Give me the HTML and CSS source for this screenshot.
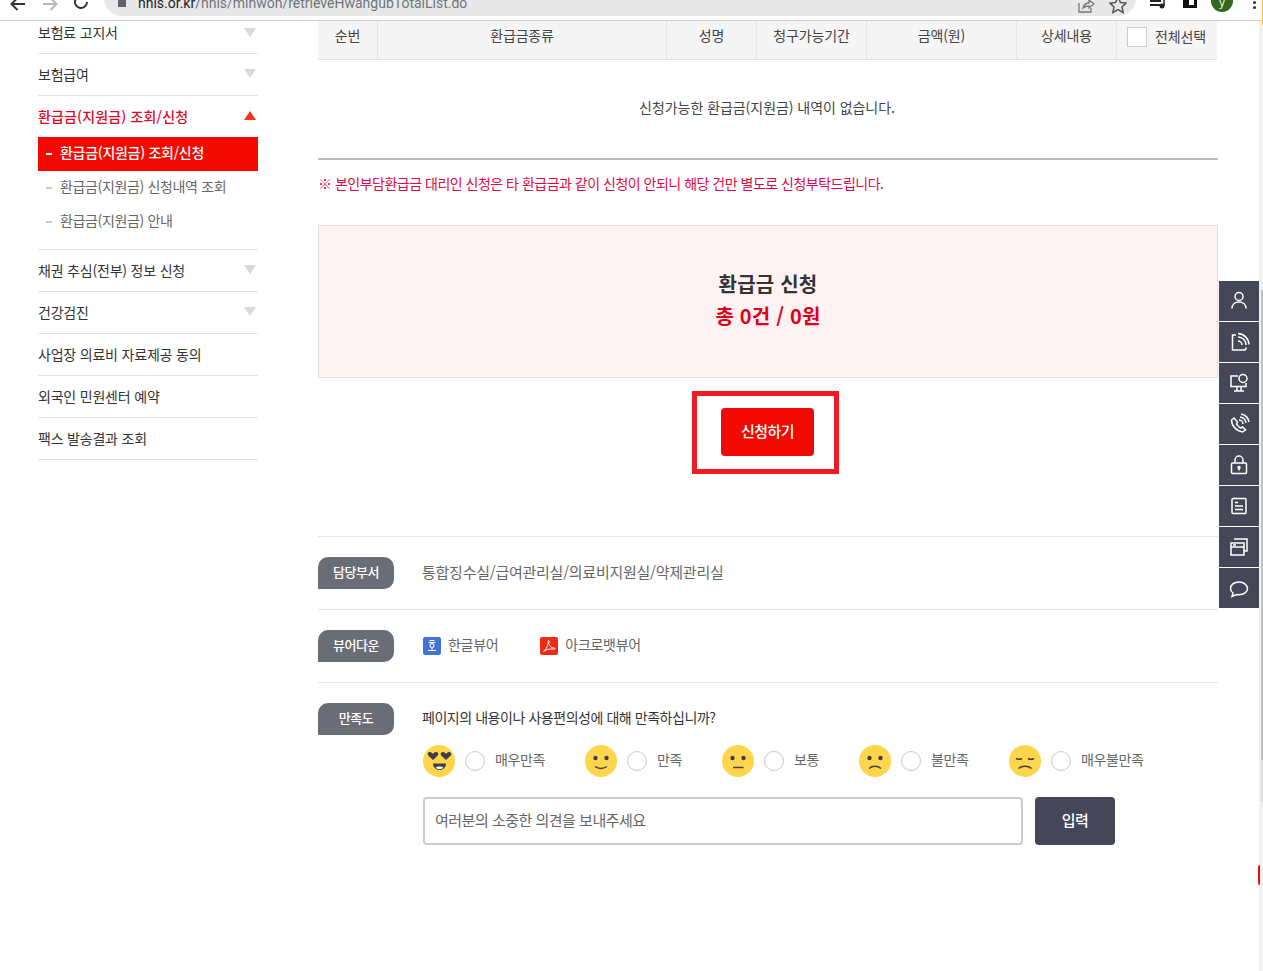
FILE: index.html
```html
<!DOCTYPE html>
<html lang="ko">
<head>
<meta charset="utf-8">
<title>환급금 조회/신청</title>
<link rel="stylesheet" href="styles.css">
</head>
<body>
<div class="viewport">
  <header class="chrome">
    <svg class="c-ico back" width="18" height="16" viewBox="0 0 18 16"><path d="M16 4H3M8.500 -2 2.500 4l6 6" fill="none" stroke="#333" stroke-width="2"/></svg>
    <svg class="c-ico fwd" width="18" height="16" viewBox="0 0 18 16"><path d="M1 4h13M8.500 -2l6 6-6 6" fill="none" stroke="#b5b5b5" stroke-width="2"/></svg>
    <svg class="c-ico reload" width="18" height="16" viewBox="0 0 18 16"><path d="M14 2a6 6 0 1 1-1.500-4" fill="none" stroke="#333" stroke-width="2"/></svg>
    <div class="omnibox">
      <span class="lock"></span>
      <span class="url"><b>nhis.or.kr</b>/nhis/minwon/retrieveHwangubTotalList.do</span>
      <svg class="share" width="18" height="16" viewBox="0 0 18 16"><path d="M2 3v9h12V8M6 8c1-4 4-5 6-5V0l5 4-5 4V6c-2 0-4 0-6 2z" fill="none" stroke="#777" stroke-width="1.300"/></svg>
      <svg class="star" width="18" height="16" viewBox="0 0 18 16"><path d="M9-3l2.500 5.500 5.500.6-4 3.900 1.100 5.500L9 9.700 3.900 12.500 5 7 1 3.100l5.500-.6z" fill="none" stroke="#555" stroke-width="1.500"/></svg>
    </div>
    <svg class="queue" width="18" height="16" viewBox="0 0 18 16"><path d="M1 1h11M1 5h11" stroke="#222" stroke-width="2"/><circle cx="13" cy="6" r="2.500" fill="#222"/><path d="M15 6V-3" stroke="#222" stroke-width="1.500"/></svg>
    <span class="ext"></span>
    <span class="avatar">y</span>
    <span class="kebab"></span>
  </header>

  <div class="page">
    <nav class="side">
      <a class="menu first">보험료 고지서<i class="tri"></i></a>
      <a class="menu">보험급여<i class="tri"></i></a>
      <div class="group">
        <a class="menu open">환급금(지원금) 조회/신청<i class="tri up"></i></a>
        <ul class="sub">
          <li class="on">환급금(지원금) 조회/신청</li>
          <li>환급금(지원금) 신청내역 조회</li>
          <li>환급금(지원금) 안내</li>
        </ul>
      </div>
      <a class="menu">채권 추심(전부) 정보 신청<i class="tri"></i></a>
      <a class="menu">건강검진<i class="tri"></i></a>
      <a class="menu">사업장 의료비 자료제공 동의</a>
      <a class="menu">외국인 민원센터 예약</a>
      <a class="menu">팩스 발송결과 조회</a>
    </nav>

    <main class="main">
      <div class="thead">
        <div>순번</div><div>환급금종류</div><div>성명</div><div>청구가능기간</div><div>금액(원)</div><div>상세내용</div>
        <div class="all"><span class="check"></span>전체선택</div>
      </div>
      <div class="empty">신청가능한 환급금(지원금) 내역이 없습니다.</div>
      <p class="notice">※ 본인부담환급금 대리인 신청은 타 환급금과 같이 신청이 안되니 해당 건만 별도로 신청부탁드립니다.</p>
      <section class="summary">
        <h2>환급금 신청</h2>
        <strong>총 0건 / 0원</strong>
      </section>
      <div class="apply-wrap">
        <div class="frame"><button class="apply">신청하기</button></div>
      </div>

      <div class="info dept">
        <span class="tag">담당부서</span>
        <span class="txt">통합징수실/급여관리실/의료비지원실/약제관리실</span>
      </div>
      <div class="info view">
        <span class="tag">뷰어다운</span>
        <span class="viewer"><svg width="18" height="18" viewBox="0 0 18 18"><rect width="18" height="18" rx="2" fill="#4472d6"/><path d="M6.500 3.500h5M5.500 5.500h7M9 6.500a2 2 0 1 0 .01 0M9 10.500v2.500M5 13.500h8" fill="none" stroke="#fff" stroke-width="1.100"/></svg><span class="vt">한글뷰어</span></span>
        <span class="viewer"><svg width="18" height="18" viewBox="0 0 18 18"><rect width="18" height="18" rx="2" fill="#f02a14"/><path d="M3.500 14.500c2-1 3.800-4.500 4.800-8.500C8.300 4 8 3.500 8.500 3.500S9.300 5 8.800 6.500c1 3 2.500 4.500 5.700 4.500.8 0 .8 1 0 1-3 0-7-.5-11 2.500z" fill="none" stroke="#fff" stroke-width="1"/></svg><span class="vt">아크로뱃뷰어</span></span>
      </div>
      <div class="info satis">
        <span class="tag">만족도</span>
        <div class="satis-body">
          <p class="q">페이지의 내용이나 사용편의성에 대해 만족하십니까?</p>
          <div class="faces">
            <label class="face w1"><svg width="32" height="32" viewBox="0 0 32 32"><circle cx="16" cy="16" r="16" fill="#ffd54c"/><path d="M10 15 5.200 10.500C4 9 5 6.800 7 7c1.400 0 2.400 1 3 2 .6-1 1.600-2 3-2 2 0 3 2 1.800 3.500zM23 15l-4.800-4.500C17 9 18 6.800 20 7c1.400 0 2.400 1 3 2 .6-1 1.600-2 3-2 2 0 3 2 1.800 3.500z" fill="#3e3f4b"/><path d="M10 18.500h13c0 4-3 6.500-6.500 6.500S10 22.500 10 18.500z" fill="#3e3f4b"/><path d="M12.500 22.500c2-1.500 6-1.500 8 0-1 1.200-2.500 1.700-4 1.700s-3-.5-4-1.700z" fill="#fff"/></svg><i class="radio"></i><span>매우만족</span></label>
            <label class="face w2"><svg width="32" height="32" viewBox="0 0 32 32"><circle cx="16" cy="16" r="16" fill="#ffd54c"/><circle cx="10.500" cy="13" r="2.200" fill="#3e3f4b"/><circle cx="21.500" cy="13" r="2.200" fill="#3e3f4b"/><path d="M10 21.500c3.500 2.500 8.500 2.500 12 0" fill="none" stroke="#3e3f4b" stroke-width="1.500"/></svg><i class="radio"></i><span>만족</span></label>
            <label class="face w3"><svg width="32" height="32" viewBox="0 0 32 32"><circle cx="16" cy="16" r="16" fill="#ffd54c"/><circle cx="10.500" cy="13" r="2.200" fill="#3e3f4b"/><circle cx="21.500" cy="13" r="2.200" fill="#3e3f4b"/><path d="M11 22.500h10.500" stroke="#3e3f4b" stroke-width="1.500"/></svg><i class="radio"></i><span>보통</span></label>
            <label class="face w4"><svg width="32" height="32" viewBox="0 0 32 32"><circle cx="16" cy="16" r="16" fill="#ffd54c"/><circle cx="10.500" cy="13" r="2.200" fill="#3e3f4b"/><circle cx="21.500" cy="13" r="2.200" fill="#3e3f4b"/><path d="M10 23.500c3.500-3 8.500-3 12 0" fill="none" stroke="#3e3f4b" stroke-width="1.500"/></svg><i class="radio"></i><span>불만족</span></label>
            <label class="face"><svg width="32" height="32" viewBox="0 0 32 32"><circle cx="16" cy="16" r="16" fill="#ffd54c"/><path d="M7 13.500c2 1 4 1 6 0M19 13.500c2 1 4 1 6 0" fill="none" stroke="#3e3f4b" stroke-width="1.500"/><path d="M9.500 23.500c3.500-3 9.500-3 13 0" fill="none" stroke="#3e3f4b" stroke-width="1.500"/></svg><i class="radio"></i><span>매우불만족</span></label>
          </div>
          <div class="opinion">
            <input class="op-input" type="text" placeholder="여러분의 소중한 의견을 보내주세요">
            <button class="op-btn">입력</button>
          </div>
        </div>
      </div>
    </main>
  </div>

  <aside class="quick">
    <a><svg width="24" height="24" viewBox="0 0 24 24" fill="none" stroke="#fff" stroke-width="1.500"><circle cx="12" cy="7.500" r="4"/><path d="M5 19.500c0-4 3-6.500 7-6.500s7 2.500 7 6.500"/></svg></a>
    <a><svg width="24" height="24" viewBox="0 0 24 24" fill="none" stroke="#fff" stroke-width="1.500"><path d="M9 5H5.500v15H18l1.500-2.500"/><path d="M11 7a8 8 0 0 1 8 8M11 3.500a11.500 11.500 0 0 1 11 11M11 11a4 4 0 0 1 4 4"/></svg></a>
    <a><svg width="24" height="24" viewBox="0 0 24 24" fill="none" stroke="#fff" stroke-width="1.500"><path d="M11 5H4v10.500h15V12"/><path d="M10 15.500v4M14 15.500v4M7 20h10"/><circle cx="16" cy="7.500" r="4"/></svg></a>
    <a><svg width="24" height="24" viewBox="0 0 24 24" fill="none" stroke="#fff" stroke-width="1.500"><path d="M7 6 4.500 8c0 6 5 11 11 12l3-2-3-3-2 1c-2-1-3-3-4-4l1-2z"/><path d="M12 8a4 4 0 0 1 4 4M13 5a7 7 0 0 1 6 6M14 2a10 10 0 0 1 8 8"/></svg></a>
    <a><svg width="24" height="24" viewBox="0 0 24 24" fill="none" stroke="#fff" stroke-width="1.500"><rect x="4.500" y="10" width="15" height="10.500" rx="1"/><path d="M8 10V7a4 4 0 0 1 8 0v3"/><circle cx="12" cy="14.500" r="1" fill="#fff"/><path d="M12 15v2.500"/></svg></a>
    <a><svg width="24" height="24" viewBox="0 0 24 24" fill="none" stroke="#fff" stroke-width="1.500"><rect x="5" y="4.500" width="14" height="15" rx="1"/><path d="M8 8.500h3M8 12h8M8 15.500h8"/></svg></a>
    <a><svg width="24" height="24" viewBox="0 0 24 24" fill="none" stroke="#fff" stroke-width="1.500"><rect x="4" y="8" width="13" height="12"/><path d="M4 12h13M7 4h13v12h-3M6 10h3"/></svg></a>
    <a><svg width="24" height="24" viewBox="0 0 24 24" fill="none" stroke="#fff" stroke-width="1.500"><path d="M12 6c-5 0-8.500 3-8.500 6.500 0 2 1 3.500 2.500 4.500l-1 3.500 4.500-2c.8.200 1.600.2 2.500.2 5 0 8.500-3 8.500-6.200S17 6 12 6z"/></svg></a>
  </aside>
  <div class="scrollbar"><span></span></div>
  <span class="yellow-edge"></span>
  <span class="red-tab"></span>
</div>
</body>
</html>
```

FILE: styles.css
```css
* { box-sizing: border-box; }
html, body { margin: 0; padding: 0; height: 100%; overflow: hidden; background: #fff; }
body { font-family: "Noto Sans CJK KR", "Noto Sans", sans-serif; color: #333; font-size: 14px; letter-spacing: -0.5px; }
p, h2, ul { margin: 0; padding: 0; list-style: none; }
a { display: block; color: inherit; }
button, input { font-family: inherit; letter-spacing: inherit; }

.viewport { position: relative; width: 1263px; height: 971px; overflow: hidden; }

/* browser bar */
.chrome { position: relative; height: 21px; border-bottom: 1px solid #cdcdcd; background: #fff; overflow: hidden; }
.c-ico, .queue, .ext, .avatar, .kebab, .omnibox { position: absolute; }
.back { left: 9px; top: 0; }
.fwd { left: 42px; top: 0; }
.reload { left: 73px; top: 0; }
.omnibox { left: 104px; top: -20px; width: 1032px; height: 36px; background: #e8e8e8; border-radius: 18px; }
.lock { position: absolute; left: 14px; top: 20px; width: 8px; height: 7px; background: #5f6368; }
.url { position: absolute; left: 34px; top: 13px; font-family: "Roboto", sans-serif; font-size: 14px; line-height: 20px; color: #70757a; letter-spacing: 0; white-space: nowrap; }
.url b { font-weight: 400; color: #222; }
.share { position: absolute; left: 973px; top: 20px; }
.star { position: absolute; left: 1005px; top: 20px; }
.queue { left: 1149px; top: 0; }
.ext { left: 1183px; top: -4px; width: 14px; height: 12px; border: 3px solid #111; border-left-width: 6px; background: #fff; }
.avatar { left: 1211px; top: -10px; width: 22px; height: 22px; border-radius: 50%; background: #33691e; color: #fff; font-family: "Open Sans", sans-serif; font-size: 11px; line-height: 24px; text-align: center; letter-spacing: 0; }
.kebab { left: 1253px; top: 1px; width: 3px; height: 3px; background: #333; border-radius: 50%; box-shadow: 0 5px 0 #333; }

/* page */
.page { display: flex; align-items: flex-start; padding-left: 38px; }
.side { width: 220px; flex: none; margin-right: 60px; }
.menu { position: relative; height: 42px; line-height: 40px; border-bottom: 1px solid #e1e1e1; font-size: 14px; color: #333; white-space: nowrap; letter-spacing: -0.2px; }
.menu.first { height: 33px; line-height: 22px; }
.tri { position: absolute; right: 2px; top: 15px; border-left: 6px solid transparent; border-right: 6px solid transparent; border-top: 9px solid #d9d9d9; }
.menu.first .tri { top: 7px; }
.tri.up { border-top: 0; border-bottom: 9px solid #f5341c; }
.group { border-bottom: 1px solid #e1e1e1; padding-bottom: 10px; }
.menu.open { border-bottom: 0; color: #dc0a1e; font-weight: 500; height: 41px; letter-spacing: 0.15px; }
.sub li { position: relative; height: 34px; line-height: 30px; padding-left: 22px; color: #666; white-space: nowrap; letter-spacing: -0.35px; }
.sub li::before { content: ""; position: absolute; left: 8px; top: 16px; width: 6px; height: 2px; background: #ccc; }
.sub li.on { background: #f20a00; color: #fff; font-weight: 500; letter-spacing: -0.3px; }
.sub li.on::before { background: #fff; }

.main { width: 900px; flex: none; }
.thead { display: grid; grid-template-columns: 60px 289px 90px 110px 150px 100px 99px; width: 899px; height: 39px; background: #f5f5f5; border-bottom: 1px solid #e1e1e1; letter-spacing: -0.15px; }
.thead > div { display: flex; align-items: center; justify-content: center; padding-bottom: 10px; border-right: 1px solid #e6e6e6; color: #444; }
.thead > div.all { border-right: 0; padding-bottom: 8px; }
.check { width: 20px; height: 20px; border: 1px solid #ccc; background: #fff; margin: 0 8px -2px 0; }
.empty { height: 100px; border-bottom: 2px solid #bbb; padding: 37px 2px 0 0; line-height: 21px; text-align: center; color: #444; letter-spacing: -0.05px; }
.notice { margin-top: 12px; line-height: 22px; font-size: 14px; letter-spacing: -0.5px; color: #dc0a46; }
.summary { margin-top: 31px; height: 153px; background: #fff2f2; border: 1px solid #e8e0e0; text-align: center; padding-top: 42px; }
.summary h2 { font-size: 20px; line-height: 32px; font-weight: 700; color: #333; letter-spacing: 0.2px; }
.summary strong { display: block; font-size: 20px; line-height: 32px; font-weight: 700; color: #e0001b; letter-spacing: 0.2px; }
.apply-wrap { margin-top: 13px; height: 146px; padding-left: 374px; border-bottom: 1px solid #e6e6e6; }
.frame { width: 147px; height: 83px; border: 5px solid #ed1c24; padding: 12px 20px 12px 24px; }
.apply { width: 93px; height: 48px; border: 0; border-radius: 4px; background: #f20a00; color: #fff; font-size: 15px; font-weight: 500; padding: 0 0 4px; }

.info { display: flex; border-bottom: 1px solid #e6e6e6; height: 73px; padding-top: 20px; }
.tag { flex: none; width: 76px; height: 32px; line-height: 30px; background: #6b6d76; border-radius: 10px 10px 10px 0; color: #fff; text-align: center; font-size: 13px; margin-right: 29px; font-weight: 500; }
.txt { line-height: 30px; margin-left: -1px; font-size: 15px; color: #666; letter-spacing: -0.25px; }
.viewer { display: flex; align-items: center; gap: 7px; height: 32px; color: #666; margin-right: 42px; letter-spacing: -0.3px; }
.vt { padding-bottom: 4px; line-height: 28px; }
.satis { border-bottom: 0; height: auto; }
.q { line-height: 28px; margin: 0 0 0 -1px; color: #333; letter-spacing: -0.45px; }
.faces { display: flex; margin-top: 14px; height: 32px; }
.face { display: flex; align-items: center; color: #666; font-size: 14px; letter-spacing: -0.4px; }
.face span { padding-bottom: 4px; }
.face .radio { width: 20px; height: 20px; margin: 0 10px; border: 1px solid #c8c8c8; border-radius: 50%; background: #fff; }
.w1 { width: 162px; } .w2 { width: 137px; } .w3 { width: 137px; } .w4 { width: 150px; }
.opinion { display: flex; gap: 12px; margin-top: 20px; }
.op-input { width: 600px; height: 48px; border: 2px solid #ccc; border-radius: 4px; padding: 0 10px 4px; font-size: 15px; color: #666; }
.op-input::placeholder { color: #666; opacity: 1; }
.op-btn { width: 80px; height: 48px; border: 0; border-radius: 4px; background: #454759; color: #fff; font-size: 15px; font-weight: 500; padding: 0 0 4px; }

/* floating */
.quick { position: absolute; left: 1219px; top: 281px; width: 40px; display: flex; flex-direction: column; gap: 1px; }
.quick a { height: 40px; background: #454759; display: flex; align-items: center; justify-content: center; }
.scrollbar { position: absolute; left: 1259px; top: 21px; bottom: 0; width: 4px; background: #f1f1f1; }
.scrollbar span { display: block; width: 2px; margin: 269px 0 0 2px; height: 512px; background: linear-gradient(#c1c1c1 470px, #dcdcdc 470px); }
.yellow-edge { position: absolute; left: 1262px; top: 0; width: 1px; height: 26px; background: #f2c94c; }
.red-tab { position: absolute; left: 1258px; top: 865px; width: 2px; height: 20px; background: #f20a00; border-radius: 2px 0 0 2px; }
```
